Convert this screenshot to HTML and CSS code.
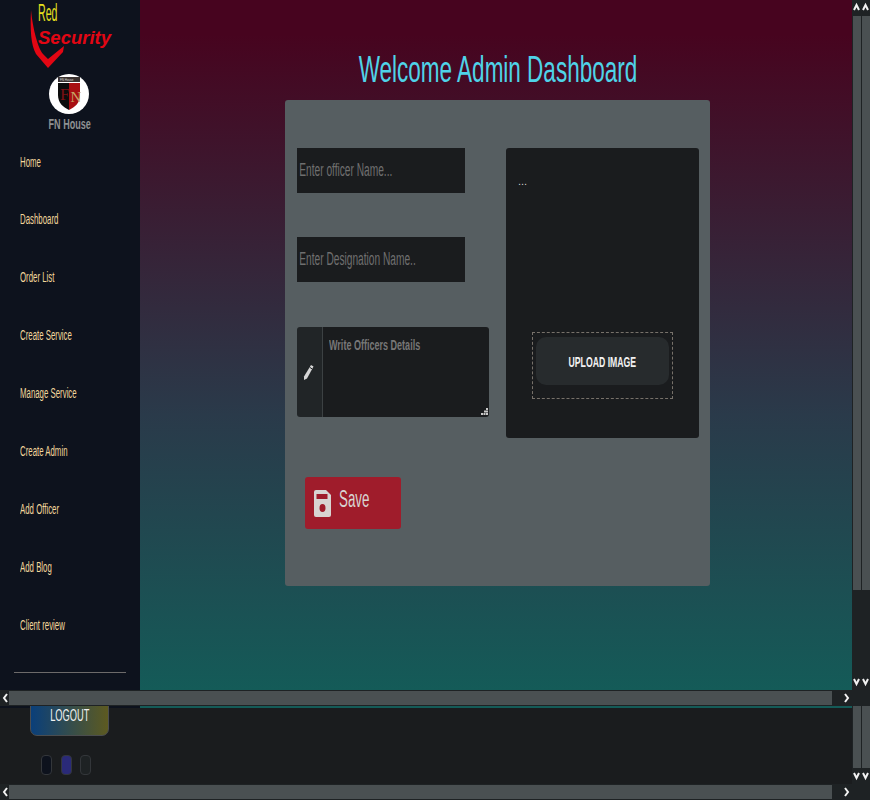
FILE: index.html
```html
<!DOCTYPE html>
<html lang="en">
<head>
    <meta charset="UTF-8">
    <meta name="viewport" content="width=device-width, initial-scale=1.0">
    <title>Admin Dashboard</title>
    <link rel="stylesheet" href="styles.css">
</head>
<body>
    <div class="frame">
        <div class="frame-body">
            <aside class="sidebar">
                <div class="logo">
                    <svg class="logo-mark" width="40" height="70" viewBox="0 0 40 70">
                        <path d="M1 10 C0 30 1 45 6 54 L18 68 L33 52 L34 46 L18 59 L13 54 C8 48 3 30 1 10 Z" fill="#e30613"/>
                    </svg>
                    <span class="logo-red">Red</span>
                    <span class="logo-security">Security</span>
                </div>
                <div class="brand">
                    <div class="brand-badge">
                        <svg width="24" height="34" viewBox="0 0 24 34">
                            <rect x="1" y="0" width="22" height="5" fill="#3a3230"/>
                            <path d="M1 6 H12 V33 C6 30 1 26 1 18 Z" fill="#0c0c0c"/>
                            <path d="M12 6 H23 V18 C23 26 18 30 12 33 Z" fill="#a80f12"/>
                            <text x="3" y="3.800" class="badge-top">FN House</text>
                            <text x="3" y="23" class="badge-f">F</text>
                            <text x="13.500" y="25" class="badge-n">N</text>
                        </svg>
                    </div>
                    <div class="brand-name"><span class="squeeze squeeze-center">FN House</span></div>
                </div>
                <nav class="side-nav">
                    <a href="#">Home</a>
                    <a href="#">Dashboard</a>
                    <a href="#">Order List</a>
                    <a href="#">Create Service</a>
                    <a href="#">Manage Service</a>
                    <a href="#">Create Admin</a>
                    <a href="#">Add Officer</a>
                    <a href="#">Add Blog</a>
                    <a href="#">Client review</a>
                </nav>
                <hr class="side-line">
            </aside>
            <main class="main">
                <h1 class="title">Welcome Admin Dashboard</h1>
                <section class="card">
                    <div class="card-top">
                        <div class="fields">
                            <div class="field"><input class="text-input" type="text" placeholder="Enter officer Name..."></div>
                            <div class="field"><input class="text-input" type="text" placeholder="Enter Designation Name.."></div>
                            <div class="details">
                                <span class="details-icon">
                                    <svg width="11" height="17" viewBox="0 0 11 17">
                                        <path d="M8 1 L10.500 2.600 L4 14.500 L1 16 L1 12.500 Z" fill="#d6d6d6"/>
                                        <path d="M6.800 3.400 L9 4.800" stroke="#1f2325" stroke-width="1"/>
                                    </svg>
                                </span>
                                <div class="details-box">
                                    <span class="details-text">Write Officers Details</span>
                                    <svg class="grip" width="7" height="7" viewBox="0 0 7 7">
                                        <path d="M5 0h2v2H5zM3 2.500h2v2H3zM5 2.500h2v2H5zM0 5h2v2H0zM2.500 5h2v2h-2zM5 5h2v2H5z" fill="#c9c9c9"/>
                                    </svg>
                                </div>
                            </div>
                        </div>
                        <div class="upload-panel">
                            <div class="preview">...</div>
                            <div class="upload-drop">
                                <button class="upload-btn" type="button"><span class="squeeze squeeze-center">UPLOAD IMAGE</span></button>
                            </div>
                        </div>
                    </div>
                    <button class="save-btn" type="button">
                        <svg width="17" height="27" viewBox="0 0 17 27">
                            <path d="M2 0 H12 L17 5 V25 Q17 27 15 27 H2 Q0 27 0 25 V2 Q0 0 2 0 Z" fill="#d8d4d2"/>
                            <rect x="2.500" y="4" width="11" height="5" fill="#9f1c2b"/>
                            <ellipse cx="8.500" cy="18" rx="3" ry="4" fill="#9f1c2b"/>
                        </svg>
                        <span class="squeeze">Save</span>
                    </button>
                </section>
            </main>
            <div class="vscroll">
                <div class="vtrack">
                    <svg class="chevron" width="8" height="16" viewBox="0 0 8 16"><path d="M1 10 L3.500 5 L6 10" /></svg>
                    <div class="thumb"></div>
                    <svg class="chevron chevron-end" width="8" height="16" viewBox="0 0 8 16"><path d="M1 5 L3.500 10 L6 5" /></svg>
                </div>
                <div class="vtrack">
                    <svg class="chevron" width="8" height="16" viewBox="0 0 8 16"><path d="M1 10 L3.500 5 L6 10" /></svg>
                    <div class="thumb"></div>
                    <svg class="chevron chevron-end" width="8" height="16" viewBox="0 0 8 16"><path d="M1 5 L3.500 10 L6 5" /></svg>
                </div>
            </div>
        </div>
        <div class="hscroll">
            <svg class="chevron harrow" width="8" height="14" viewBox="0 0 8 14"><path d="M6 3 L3 7 L6 11" /></svg>
            <div class="hthumb"></div>
            <svg class="chevron harrow harrow-end" width="8" height="14" viewBox="0 0 8 14"><path d="M2 3 L5 7 L2 11" /></svg>
        </div>
        <div class="lower">
            <div class="lower-main">
                <div class="lower-strip"></div>
                <button class="logout" type="button"><span class="squeeze squeeze-center">LOGOUT</span></button>
                <div class="themes">
                    <span class="theme theme-dark"></span>
                    <span class="theme theme-blue"></span>
                    <span class="theme theme-gray"></span>
                </div>
            </div>
            <div class="vscroll vscroll-low">
                <div class="vtrack">
                    <div class="thumb"></div>
                    <svg class="chevron chevron-end" width="8" height="16" viewBox="0 0 8 16"><path d="M1 5 L3.500 10 L6 5" /></svg>
                </div>
                <div class="vtrack">
                    <div class="thumb"></div>
                    <svg class="chevron chevron-end" width="8" height="16" viewBox="0 0 8 16"><path d="M1 5 L3.500 10 L6 5" /></svg>
                </div>
            </div>
        </div>
        <div class="hscroll">
            <svg class="chevron harrow" width="8" height="14" viewBox="0 0 8 14"><path d="M6 3 L3 7 L6 11" /></svg>
            <div class="hthumb"></div>
            <svg class="chevron harrow harrow-end" width="8" height="14" viewBox="0 0 8 14"><path d="M2 3 L5 7 L2 11" /></svg>
        </div>
    </div>
</body>
</html>
```

FILE: styles.css
```css
* {
    box-sizing: border-box;
}

body {
    margin: 0;
    overflow: hidden;
    background: #1a1c1e;
    font-family: "Liberation Sans", Arial, sans-serif;
}

.squeeze {
    display: inline-block;
    transform: scaleX(0.58);
    transform-origin: left center;
    white-space: nowrap;
}

.squeeze-center {
    transform-origin: center;
}

.frame {
    width: 870px;
    height: 800px;
    display: flex;
    flex-direction: column;
}

.frame-body {
    height: 690px;
    display: flex;
}

.sidebar {
    width: 140px;
    background: #0d121d;
    display: flex;
    flex-direction: column;
}

.logo {
    position: relative;
    height: 70px;
}

.logo-mark {
    position: absolute;
    left: 30px;
    top: 0;
}

.logo-red {
    position: absolute;
    left: 38px;
    top: 0;
    font-size: 23px;
    line-height: 26px;
    color: #e6e01e;
    transform: scaleX(0.46);
    transform-origin: left center;
}

.logo-security {
    position: absolute;
    left: 38px;
    top: 27px;
    font-size: 18.500px;
    line-height: 21px;
    font-weight: bold;
    font-style: italic;
    color: #e30613;
}

.brand {
    display: flex;
    flex-direction: column;
    align-items: center;
    margin-top: 4px;
}

.brand-badge {
    width: 40px;
    height: 40px;
    margin-right: 2px;
    border-radius: 50%;
    background: #fff;
    display: flex;
    align-items: center;
    justify-content: center;
}

.badge-top {
    font-size: 3px;
    fill: #ddd;
}

.badge-f {
    font-size: 17px;
    fill: #7a1015;
    font-family: "Liberation Serif", serif;
}

.badge-n {
    font-size: 15px;
    fill: #c7a667;
    font-family: "Liberation Serif", serif;
}

.brand-name {
    margin-top: 2px;
    font-size: 14px;
    line-height: 16px;
    font-weight: bold;
    color: #8f9192;
}

.brand-name .squeeze {
    transform: scaleX(0.646);
}

.side-nav {
    margin-top: 22.500px;
    padding-left: 20px;
    display: flex;
    flex-direction: column;
    align-items: flex-start;
    gap: 43.900px;
}

.side-nav a {
    height: 14px;
    font-size: 14px;
    line-height: 14px;
    color: #f3d79c;
    text-decoration: none;
    white-space: nowrap;
    transform: scaleX(0.56);
    transform-origin: left center;
}

.side-line {
    width: 112px;
    margin: 40px 0 0 14px;
    border: 0;
    border-top: 1px solid #6c6a6a;
}

.main {
    flex: 1;
    padding: 48px 0 0 3px;
    background: linear-gradient(#47041f 0%, #47041f 5%, #2a3a4a 60%, #145b58 100%);
    display: flex;
    flex-direction: column;
    align-items: center;
}

.title {
    margin: 0;
    height: 52px;
    font-size: 37px;
    line-height: 44px;
    font-weight: normal;
    white-space: nowrap;
    color: #4fd3e8;
    transform: scaleX(0.608);
}

.card {
    width: 425px;
    height: 486px;
    padding: 48px 11px 0 12px;
    background: #565e61;
    border-radius: 3px;
}

.card-top {
    display: flex;
    justify-content: space-between;
}

.fields {
    width: 192px;
    display: flex;
    flex-direction: column;
    align-items: flex-start;
}

.field {
    width: 168px;
    height: 45px;
    margin-bottom: 44px;
    overflow: hidden;
    background: #1a1c1e;
}

.text-input {
    width: 295px;
    height: 45px;
    padding: 0 4px;
    background: transparent;
    border: 0;
    font-family: inherit;
    font-size: 18px;
    color: #ddd;
    transform: scaleX(0.565);
    transform-origin: left center;
}

.text-input::placeholder {
    color: #6f6f6f;
}

.details {
    width: 192px;
    height: 90px;
    margin-top: 1px;
    display: flex;
    border-radius: 3px;
    overflow: hidden;
}

.details-icon {
    width: 26px;
    padding-right: 2px;
    background: #212527;
    border-right: 1px solid #3c4143;
    display: flex;
    align-items: center;
    justify-content: center;
}

.details-box {
    position: relative;
    flex: 1;
    background: #1a1c1e;
    padding: 9px 6px;
}

.details-text {
    display: inline-block;
    font-size: 14px;
    line-height: 18px;
    font-weight: bold;
    white-space: nowrap;
    color: #777;
    transform: scaleX(0.645);
    transform-origin: left center;
}

.grip {
    position: absolute;
    right: 1px;
    bottom: 2px;
}

.upload-panel {
    width: 193px;
    height: 290px;
    background: #1a1c1e;
    border-radius: 3px;
    display: flex;
    flex-direction: column;
    align-items: center;
}

.preview {
    align-self: flex-start;
    height: 184px;
    padding: 26px 0 0 12px;
    font-size: 11px;
    line-height: 14px;
    color: #cfcfcf;
}

.upload-drop {
    width: 141px;
    height: 67px;
    padding: 4px 3px;
    border: 1px dashed #77716a;
}

.upload-btn {
    width: 133px;
    height: 48px;
    border: 0;
    border-radius: 10px;
    background: #272b2d;
    font-family: inherit;
    font-size: 15px;
    font-weight: bold;
    color: #f1f1f1;
}

.save-btn {
    width: 96px;
    height: 52px;
    margin: 39px 0 0 8px;
    padding: 0 0 8px 9px;
    display: flex;
    align-items: center;
    gap: 8px;
    border: 0;
    border-radius: 3px;
    background: #9f1c2b;
    font-family: inherit;
    font-size: 23px;
    color: #d8d4d2;
}

.save-btn svg {
    flex: none;
    margin-top: 8px;
}

.vscroll {
    width: 18px;
    padding-left: 1px;
    background: #1e2224;
    display: flex;
    justify-content: space-between;
}

.vtrack {
    width: 8px;
    display: flex;
    flex-direction: column;
}

.chevron {
    flex: none;
}

.chevron path {
    fill: none;
    stroke: #f2f2f2;
    stroke-width: 2;
}

.chevron-end {
    margin-top: auto;
}

.thumb {
    width: 8px;
    height: 574px;
    background: #4a5052;
}

.hscroll {
    position: relative;
    height: 16px;
    padding: 1px 0 0 9px;
    background: #1e2224;
}

.hthumb {
    width: 823px;
    height: 14px;
    background: #4a5052;
}

.harrow {
    position: absolute;
    left: 1px;
    top: 1px;
}

.harrow-end {
    left: 843px;
}

.lower {
    height: 78px;
    display: flex;
}

.lower-main {
    position: relative;
    flex: 1;
    overflow: hidden;
    background: #1a1c1e;
}

.lower-strip {
    height: 2px;
    background: linear-gradient(90deg, #0d121d 140px, #145b58 140px);
}

.logout {
    position: absolute;
    left: 30px;
    top: -20px;
    width: 79px;
    height: 50px;
    padding: 10px 0 0;
    border: 1px solid #4b4d4f;
    border-radius: 7px;
    background: linear-gradient(90deg, #0a3f7a, #5d5a20);
    font-family: inherit;
    font-size: 16px;
    color: #f0f0f0;
}

.themes {
    position: absolute;
    left: 41px;
    top: 49px;
    display: flex;
    gap: 8.500px;
}

.theme {
    width: 11px;
    height: 20px;
    border-radius: 4px;
    border: 1px solid #33363a;
}

.theme-dark {
    background: #0d121d;
}

.theme-blue {
    background: #2a2a78;
}

.theme-gray {
    background: #1e2224;
}

.vscroll-low .thumb {
    height: 62px;
}
```
